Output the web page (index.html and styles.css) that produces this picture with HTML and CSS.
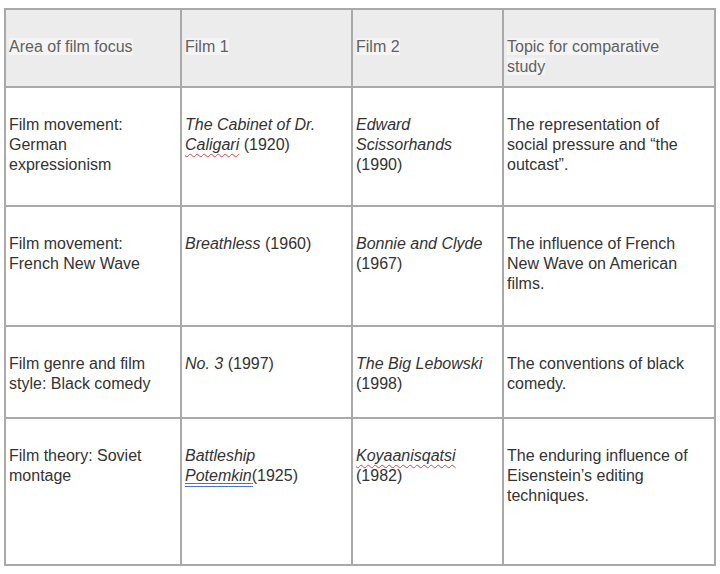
FILE: index.html
```html
<!DOCTYPE html>
<html lang="en">
<head>
<meta charset="utf-8">
<title>Film comparative study</title>
<link rel="stylesheet" href="styles.css">
</head>
<body>
<table class="films">
  <colgroup>
    <col class="c1"><col class="c2"><col class="c3"><col class="c4">
  </colgroup>
  <thead>
    <tr class="head">
      <th><span class="hl">Area of film focus</span></th>
      <th><span class="hl">Film 1</span></th>
      <th><span class="hl">Film 2</span></th>
      <th><span class="hl">Topic for comparative<br>study</span></th>
    </tr>
  </thead>
  <tbody>
    <tr class="r1">
      <td>Film movement:<br>German<br>expressionism</td>
      <td><i>The Cabinet of Dr.<br><span class="spell">Caligari</span></i> (1920)</td>
      <td><i>Edward<br>Scissorhands</i><br>(1990)</td>
      <td>The representation of<br>social pressure and “the<br>outcast”.</td>
    </tr>
    <tr class="r2">
      <td>Film movement:<br>French New Wave</td>
      <td><i>Breathless</i> (1960)</td>
      <td><i>Bonnie and Clyde</i><br>(1967)</td>
      <td>The influence of French<br>New Wave on American<br>films.</td>
    </tr>
    <tr class="r3">
      <td>Film genre and film<br>style: Black comedy</td>
      <td><i>No. 3</i> (1997)</td>
      <td><i>The Big Lebowski</i><br>(1998)</td>
      <td>The conventions of black<br>comedy.</td>
    </tr>
    <tr class="r4">
      <td>Film theory: Soviet<br>montage</td>
      <td><i>Battleship<br><span class="gram">Potemkin</span></i><span class="gram">(</span>1925)</td>
      <td><i class="spell">Koyaanisqatsi</i><br>(1982)</td>
      <td>The enduring influence of<br>Eisenstein’s editing<br>techniques.</td>
    </tr>
  </tbody>
</table>
</body>
</html>
```
FILE: styles.css
```css
html, body {
  margin: 0;
  background: #ffffff;
}
body {
  padding: 8px 0 0 4px;
  font-family: "Liberation Sans", Arial, sans-serif;
}
.films {
  border-collapse: collapse;
  table-layout: fixed;
  width: 710px;
  font-size: 16px;
  line-height: 20px;
  color: #333333;
}
.c1 { width: 176px; }
.c2 { width: 171px; }
.c3 { width: 151px; }
.c4 { width: 212px; }
.films th,
.films td {
  border: 2px solid #a9a9a9;
  vertical-align: top;
  text-align: left;
  padding: 27px 4px 0 3px;
  font-weight: normal;
}
.head th {
  background: #ececec;
  color: #616161;
}
.hl {
  background: #f4f4f4;
}
.head { height: 78px; }
.r1 { height: 119px; }
.r2 { height: 120px; }
.r3 { height: 92px; }
.r4 { height: 147px; }
.spell {
  text-decoration: underline wavy #d0474f;
  text-decoration-thickness: 1px;
  text-underline-offset: 3px;
}
.gram {
  text-decoration: underline double #4a72c8;
  text-underline-offset: 2px;
}
```
